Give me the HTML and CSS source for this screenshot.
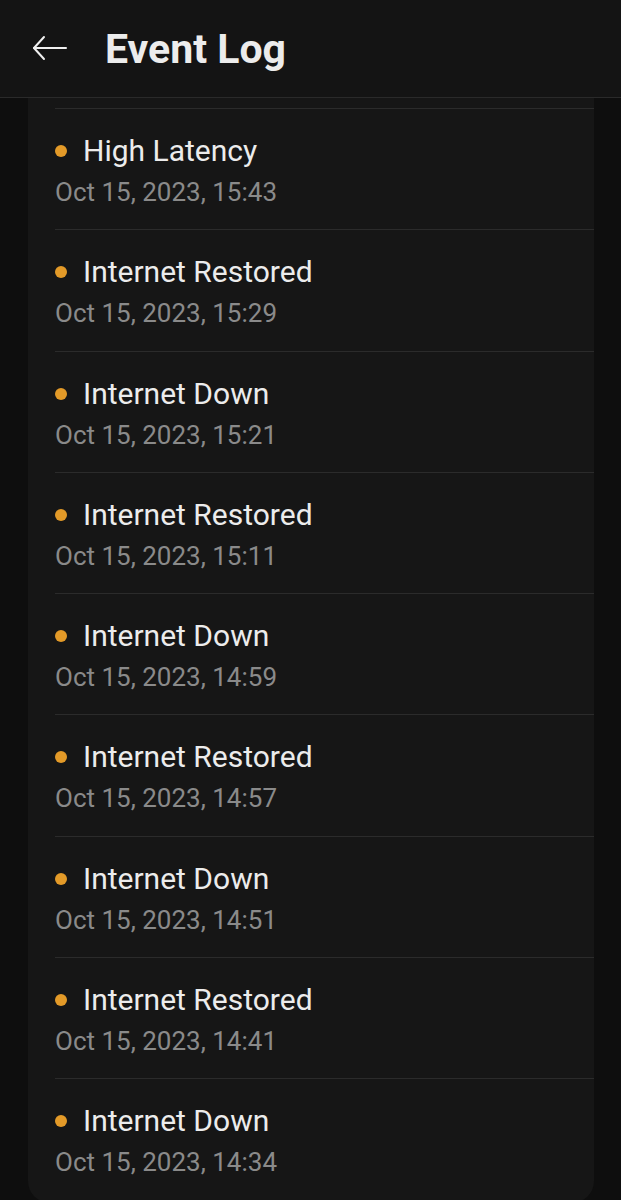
FILE: index.html
```html
<!DOCTYPE html>
<html lang="en">
<head>
<meta charset="utf-8">
<title>Event Log</title>
<link rel="stylesheet" href="styles.css">
</head>
<body>
<header class="topbar">
  <button class="back" aria-label="Back">
    <svg width="36" height="26" viewBox="0 0 36 26" fill="none" stroke="#f0f0f0" stroke-width="2" stroke-linecap="round" stroke-linejoin="round">
      <path d="M34 13H2"/>
      <path d="M12 2L2 13l10 11"/>
    </svg>
  </button>
  <h1 class="title">Event Log</h1>
</header>
<main class="content">
  <ul class="card">
    <li class="event"><div class="event-name"><span class="dot"></span>High Latency</div><div class="event-time">Oct 15, 2023, 15:43</div></li>
    <li class="event"><div class="event-name"><span class="dot"></span>Internet Restored</div><div class="event-time">Oct 15, 2023, 15:29</div></li>
    <li class="event"><div class="event-name"><span class="dot"></span>Internet Down</div><div class="event-time">Oct 15, 2023, 15:21</div></li>
    <li class="event"><div class="event-name"><span class="dot"></span>Internet Restored</div><div class="event-time">Oct 15, 2023, 15:11</div></li>
    <li class="event"><div class="event-name"><span class="dot"></span>Internet Down</div><div class="event-time">Oct 15, 2023, 14:59</div></li>
    <li class="event"><div class="event-name"><span class="dot"></span>Internet Restored</div><div class="event-time">Oct 15, 2023, 14:57</div></li>
    <li class="event"><div class="event-name"><span class="dot"></span>Internet Down</div><div class="event-time">Oct 15, 2023, 14:51</div></li>
    <li class="event"><div class="event-name"><span class="dot"></span>Internet Restored</div><div class="event-time">Oct 15, 2023, 14:41</div></li>
    <li class="event"><div class="event-name"><span class="dot"></span>Internet Down</div><div class="event-time">Oct 15, 2023, 14:34</div></li>
  </ul>
</main>
</body>
</html>
```

FILE: styles.css
```css
* { box-sizing: border-box; }
html, body {
  margin: 0;
  padding: 0;
  background: #0e0e0e;
  font-family: Roboto, "Noto Sans", sans-serif;
  color: #ececec;
}
.topbar {
  height: 98px;
  display: flex;
  align-items: center;
  background: #141414;
  border-bottom: 1px solid #2a2a2a;
  padding-left: 32px;
}
.back {
  background: none;
  border: 0;
  padding: 0;
  width: 36px;
  height: 26px;
  display: flex;
  margin-top: -1px;
}
.title {
  margin: 0 0 0 37px;
  font-size: 41px;
  font-weight: 700;
  color: #ececec;
  letter-spacing: 0;
}
.content {
  padding: 0 27px 0 28px;
}
.card {
  list-style: none;
  margin: 0;
  padding: 10px 0 3px 27px;
  background: #161616;
  border-radius: 0 0 22px 22px;
}
.event {
  border-top: 1px solid #2b2b2b;
  padding: 22px 0 18.3px 0;
}
.event-name {
  display: flex;
  align-items: center;
  gap: 16px;
  font-size: 30px;
  line-height: 40px;
  color: #ececec;
}
.dot {
  width: 12px;
  height: 12px;
  border-radius: 50%;
  background: #e39a28;
  flex: none;
}
.event-time {
  font-size: 26px;
  line-height: 38px;
  padding-top: 2px;
  color: #8a8a8a;
}
```
